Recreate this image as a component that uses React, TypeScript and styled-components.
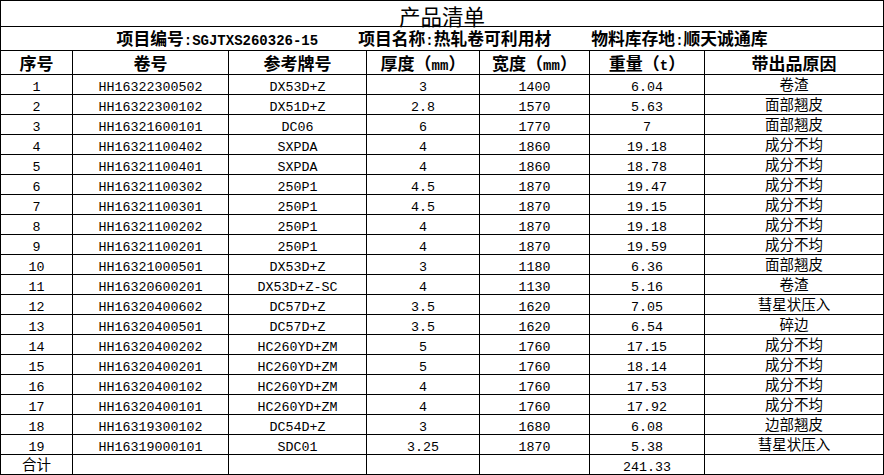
import React from 'react';
import styled, { createGlobalStyle } from 'styled-components';

interface Item {
    no: number;
    coil: string;
    grade: string;
    thickness: string;
    width: string;
    weight: string;
    reason: string;
}

const items: Item[] = [
    { no: 1, coil: 'HH16322300502', grade: 'DX53D+Z', thickness: '3', width: '1400', weight: '6.04', reason: '卷渣' },
    { no: 2, coil: 'HH16322300102', grade: 'DX51D+Z', thickness: '2.8', width: '1570', weight: '5.63', reason: '面部翘皮' },
    { no: 3, coil: 'HH16321600101', grade: 'DC06', thickness: '6', width: '1770', weight: '7', reason: '面部翘皮' },
    { no: 4, coil: 'HH16321100402', grade: 'SXPDA', thickness: '4', width: '1860', weight: '19.18', reason: '成分不均' },
    { no: 5, coil: 'HH16321100401', grade: 'SXPDA', thickness: '4', width: '1860', weight: '18.78', reason: '成分不均' },
    { no: 6, coil: 'HH16321100302', grade: '250P1', thickness: '4.5', width: '1870', weight: '19.47', reason: '成分不均' },
    { no: 7, coil: 'HH16321100301', grade: '250P1', thickness: '4.5', width: '1870', weight: '19.15', reason: '成分不均' },
    { no: 8, coil: 'HH16321100202', grade: '250P1', thickness: '4', width: '1870', weight: '19.18', reason: '成分不均' },
    { no: 9, coil: 'HH16321100201', grade: '250P1', thickness: '4', width: '1870', weight: '19.59', reason: '成分不均' },
    { no: 10, coil: 'HH16321000501', grade: 'DX53D+Z', thickness: '3', width: '1180', weight: '6.36', reason: '面部翘皮' },
    { no: 11, coil: 'HH16320600201', grade: 'DX53D+Z-SC', thickness: '4', width: '1130', weight: '5.16', reason: '卷渣' },
    { no: 12, coil: 'HH16320400602', grade: 'DC57D+Z', thickness: '3.5', width: '1620', weight: '7.05', reason: '彗星状压入' },
    { no: 13, coil: 'HH16320400501', grade: 'DC57D+Z', thickness: '3.5', width: '1620', weight: '6.54', reason: '碎边' },
    { no: 14, coil: 'HH16320400202', grade: 'HC260YD+ZM', thickness: '5', width: '1760', weight: '17.15', reason: '成分不均' },
    { no: 15, coil: 'HH16320400201', grade: 'HC260YD+ZM', thickness: '5', width: '1760', weight: '18.14', reason: '成分不均' },
    { no: 16, coil: 'HH16320400102', grade: 'HC260YD+ZM', thickness: '4', width: '1760', weight: '17.53', reason: '成分不均' },
    { no: 17, coil: 'HH16320400101', grade: 'HC260YD+ZM', thickness: '4', width: '1760', weight: '17.92', reason: '成分不均' },
    { no: 18, coil: 'HH16319300102', grade: 'DC54D+Z', thickness: '3', width: '1680', weight: '6.08', reason: '边部翘皮' },
    { no: 19, coil: 'HH16319000101', grade: 'SDC01', thickness: '3.25', width: '1870', weight: '5.38', reason: '彗星状压入' },
];

const columnWidths = [72, 156, 138, 113, 110, 115, 179];

const GlobalStyle = createGlobalStyle`
  html, body {
    margin: 0;
    padding: 0;
    background: #ffffff;
  }
`;

const Sheet = styled.table`
  width: 884px;
  border-collapse: collapse;
  table-layout: fixed;
  color: #000000;
  background: #ffffff;
`;

const TitleCell = styled.td`
  height: 25px;
  padding: 0;
  border: 1px solid #000000;
  vertical-align: top;
`;

const Title = styled.div`
  box-sizing: border-box;
  height: 25px;
  padding-top: 4px;
  text-align: center;
  font-family: "Noto Sans CJK SC", sans-serif;
  font-size: 21.5px;
  line-height: 21px;
  white-space: nowrap;
`;

const InfoCell = styled.td`
  height: 23px;
  padding: 0;
  border: 1px solid #000000;
  vertical-align: middle;
`;

const InfoLine = styled.div`
  display: flex;
  justify-content: center;
  gap: 40px;
  height: 23px;
  font-family: "Noto Sans CJK SC", sans-serif;
  font-weight: 700;
  font-size: 16.8px;
  line-height: 23px;
  white-space: nowrap;
`;

/* half-width latin inside the bold CJK lines */
const Latin = styled.span`
  font-family: "Liberation Mono", monospace;
  font-weight: 700;
  font-size: 14px;
  line-height: 0;
`;

const HeadCell = styled.th`
  height: 23px;
  padding: 0;
  border: 1px solid #000000;
  vertical-align: top;
`;

const HeadText = styled.div`
  height: 23px;
  text-align: center;
  font-family: "Noto Sans CJK SC", sans-serif;
  font-weight: 700;
  font-size: 17px;
  line-height: 23px;
  white-space: nowrap;
`;

const Cell = styled.td`
  height: 19px;
  padding: 0;
  border: 1px solid #000000;
  vertical-align: top;
`;

const CellText = styled.div<{ $cjk?: boolean }>`
  box-sizing: border-box;
  height: 19px;
  padding-top: ${props => props.$cjk ? '1.5px' : '3px'};
  text-align: center;
  white-space: nowrap;
  font-family: "Liberation Mono", "Noto Sans CJK SC", monospace;
  font-size: ${props => props.$cjk ? '14.5px' : '13.33px'};
  line-height: 19px;
`;

const headings: React.ReactNode[] = [
    '序号',
    '卷号',
    '参考牌号',
    <>厚度（<Latin>mm</Latin>）</>,
    <>宽度（<Latin>mm</Latin>）</>,
    <>重量（<Latin>t</Latin>）</>,
    '带出品原因',
];

export default function App() {
    const total = items.reduce((sum, item) => sum + parseFloat(item.weight), 0);

    const cell = (value: React.ReactNode, cjk = false) => (
        <Cell>
            <CellText $cjk={cjk}>{value}</CellText>
        </Cell>
    );

    return (
        <>
            <GlobalStyle />
            <Sheet>
                <colgroup>
                    {columnWidths.map((w, i) => <col key={i} style={{ width: w }} />)}
                </colgroup>
                <tbody>
                    <tr>
                        <TitleCell colSpan={7}>
                            <Title>产品清单</Title>
                        </TitleCell>
                    </tr>
                    <tr>
                        <InfoCell colSpan={7}>
                            <InfoLine>
                                <span>项目编号<Latin>:SGJTXS260326-15</Latin></span>
                                <span>项目名称<Latin>:</Latin>热轧卷可利用材</span>
                                <span>物料库存地<Latin>:</Latin>顺天诚通库</span>
                            </InfoLine>
                        </InfoCell>
                    </tr>
                    <tr>
                        {headings.map((h, i) => (
                            <HeadCell key={i}>
                                <HeadText>{h}</HeadText>
                            </HeadCell>
                        ))}
                    </tr>
                    {items.map(item => (
                        <tr key={item.no}>
                            {cell(item.no)}
                            {cell(item.coil)}
                            {cell(item.grade)}
                            {cell(item.thickness)}
                            {cell(item.width)}
                            {cell(item.weight)}
                            {cell(item.reason, true)}
                        </tr>
                    ))}
                    <tr>
                        {cell('合计', true)}
                        {cell('')}
                        {cell('')}
                        {cell('')}
                        {cell('')}
                        {cell(total.toFixed(2))}
                        {cell('')}
                    </tr>
                </tbody>
            </Sheet>
        </>
    );
}
